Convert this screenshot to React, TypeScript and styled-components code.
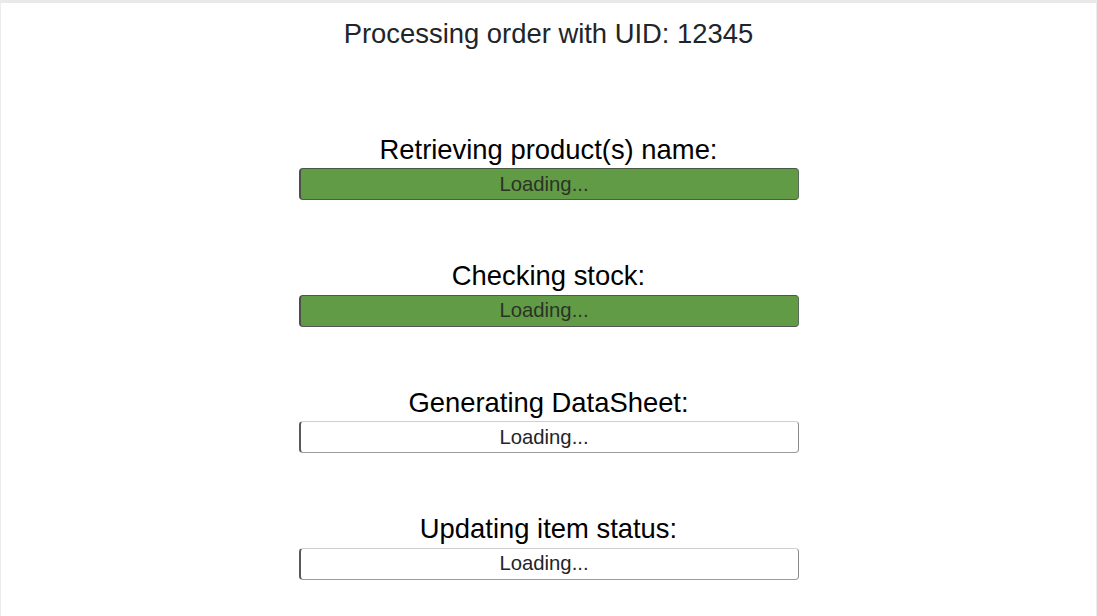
import React from 'react';
import styled, { createGlobalStyle } from 'styled-components';

const GlobalStyle = createGlobalStyle`
  html, body {
    margin: 0;
    padding: 0;
    background: #ffffff;
  }
  body {
    font-family: "Liberation Sans", Arial, sans-serif;
  }
`

const Frame = styled.div`
  box-sizing: border-box;
  height: 616px;
  border-top: 3px solid #e9e9e9;
  border-left: 1px solid #ececec;
  border-right: 1px solid #ececec;
  display: flex;
  flex-direction: column;
  align-items: center;
  overflow: hidden;
`

const Title = styled.h1`
  margin: 15px 0 0;
  font-size: 27.4px;
  font-weight: normal;
  line-height: 1.15;
  color: #212529;
`

const StepList = styled.div`
  margin-top: 84px;
  display: flex;
  flex-direction: column;
  gap: 60px;
`

const Step = styled.div`
  display: flex;
  flex-direction: column;
  align-items: center;
  gap: 3px;
`

const Label = styled.div`
  font-size: 27.4px;
  line-height: 1.15;
  color: #000;
`

const Bar = styled.div<{ done?: boolean }>`
  box-sizing: border-box;
  width: 500px;
  height: 32px;
  padding-right: 10px;
  border-radius: 4px;
  border: 1px solid;
  border-left-width: 2px;
  border-color: ${(props) => (props.done ? '#4a5a44 #5b6b55 #555 #4e4e4e' : '#cfcfcf #8a8a8a #9a9a9a #5a5a5a')};
  background-color: ${(props) => (props.done ? '#619b45' : '#ffffff')};
  color: ${(props) => (props.done ? '#2b3328' : '#212529')};
  font-size: 20.3px;
  display: flex;
  align-items: center;
  justify-content: center;
`

type StepItem = {
  name: string;
  done: boolean;
}

const STEPS: StepItem[] = [
  { name: 'Retrieving product(s) name:', done: true },
  { name: 'Checking stock:', done: true },
  { name: 'Generating DataSheet:', done: false },
  { name: 'Updating item status:', done: false },
]

export default function App() {
  return <>
    <GlobalStyle />
    <Frame>
      <Title>Processing order with UID: 12345</Title>
      <StepList>
        {
          STEPS.map(step => <Step key={step.name}>
            <Label>{step.name}</Label>
            <Bar done={step.done}>Loading...</Bar>
          </Step>)
        }
      </StepList>
    </Frame>
  </>
}
